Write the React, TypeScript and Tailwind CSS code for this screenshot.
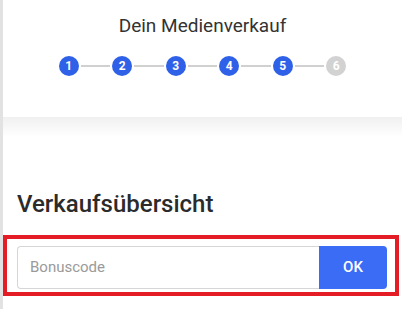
export default function App() {
  const steps = [1, 2, 3, 4, 5, 6]
  const done = 5

  return (
    <div className="h-[309px] w-full overflow-hidden border-l-[3px] border-[#e2e2e2] bg-white font-['Roboto',sans-serif]">
      {/* Header with progress steps */}
      <div className="flex h-[117px] flex-col items-center bg-white pt-[14px]">
        <h2 className="text-[19px] leading-[24px] font-normal text-[#333]">Dein Medienverkauf</h2>
        <div className="mt-[18px] flex items-center">
          {steps.map((n, i) => (
            <div key={n} className="flex items-center">
              {i > 0 && <div className="mx-[2px] h-[2px] w-[29.5px] bg-[#d0d0d0]" />}
              <div
                className={
                  n <= done
                    ? 'flex h-[20px] w-[20px] items-center justify-center rounded-full bg-[#2f61e8] text-[12px] font-bold text-white'
                    : 'flex h-[20px] w-[20px] items-center justify-center rounded-full bg-[#d2d2d2] text-[12px] font-bold text-white'
                }
              >
                {n}
              </div>
            </div>
          ))}
        </div>
      </div>
      <div className="h-[20px] bg-linear-to-b from-[#f0f0f0] to-white" />

      {/* Summary */}
      <h3 className="mt-[52px] pl-[14px] text-[24px] leading-[30px] font-medium text-[#2b2b2b]">Verkaufsübersicht</h3>

      <div className="mt-[16px] mr-[3px] flex border-4 border-[#e31c25] pt-[7px] pr-[8px] pb-[3px] pl-[10px]">
        <div className="flex h-[43px] flex-1 items-center rounded-l-[4px] border border-r-0 border-[#d6d6d6] bg-white pl-[12px] text-[15px] text-[#9a9a9a]">
          Bonuscode
        </div>
        <button className="h-[43px] w-[68px] rounded-r-[4px] bg-[#3b6cf6] text-[15px] font-medium text-white">OK</button>
      </div>
    </div>
  )
}
